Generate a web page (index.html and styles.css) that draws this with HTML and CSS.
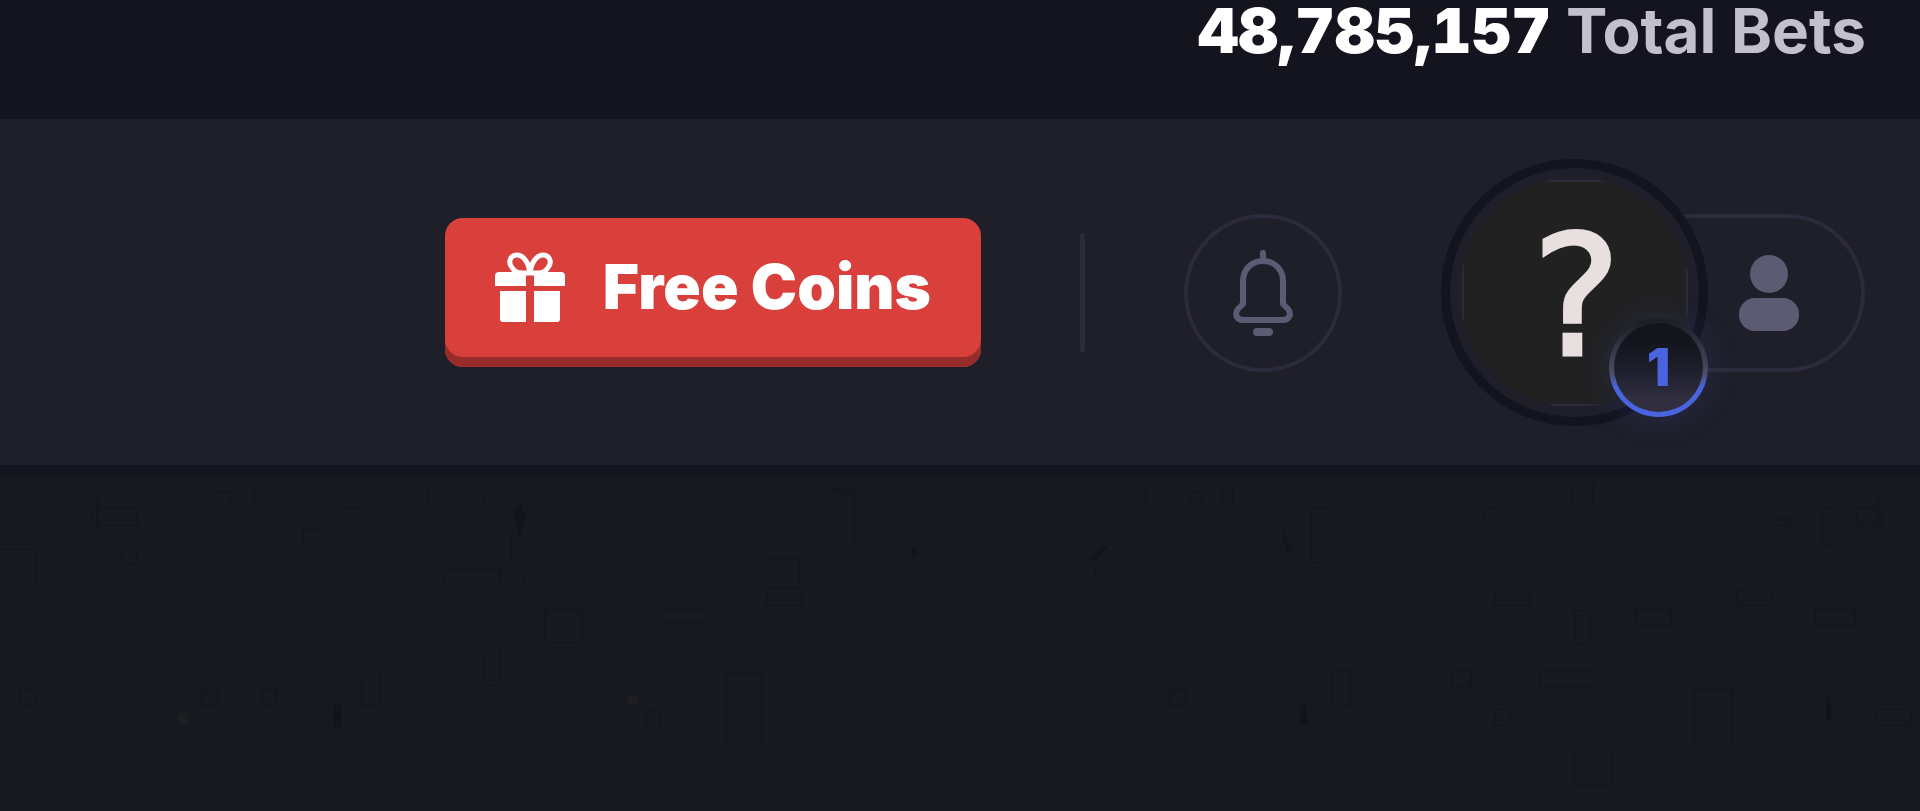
FILE: index.html
```html
<!DOCTYPE html>
<html lang="en">
<head>
  <meta charset="UTF-8">
  <meta name="viewport" content="width=device-width, initial-scale=1.0">
  <title>Free Coins</title>
  <link rel="stylesheet" href="styles.css">
</head>
<body>
  <div class="topbar">
    <p class="total-bets"><strong>48,785,157</strong> Total Bets</p>
  </div>

  <header class="header">
    <button type="button" class="btn-coins">
      <svg class="gift-icon" viewBox="0 0 70 70" aria-hidden="true">
        <path d="M4 20H31V34H0V24Q0 20 4 20ZM39 20H66Q70 20 70 24V34H39Z"/>
        <path d="M5 39H31V70H8Q5 70 5 67ZM39 39H65V67Q65 70 62 70H39Z"/>
        <path class="bow" d="M35 22C34 10 28 3 22 3C16 3 13 9 16 14C18 18 22 21 27 21H43C48 21 52 18 54 14C57 9 54 3 48 3C42 3 36 10 35 22Z"/>
      </svg>
      Free Coins
    </button>

    <span class="divider"></span>

    <button type="button" class="btn-bell" aria-label="Notifications">
      <svg class="bell-icon" viewBox="0 0 60 86" aria-hidden="true">
        <path d="M30 3V10"/>
        <path d="M30 11C18 11 10 20 10 31V54L5 59C1 64 4 70 10 70H50C56 70 59 64 55 59L50 54V31C50 20 42 11 30 11Z"/>
        <path class="clapper" d="M24 82H36"/>
      </svg>
    </button>

    <div class="account">
      <div class="avatar">
        <div class="avatar-image">?</div>
        <span class="level">1</span>
      </div>
      <button type="button" class="btn-profile" aria-label="Profile">
        <svg class="user-icon" viewBox="0 0 60 76" aria-hidden="true">
          <circle cx="30" cy="19" r="19"/>
          <rect x="0" y="43" width="60" height="33" rx="16"/>
        </svg>
      </button>
    </div>
  </header>

  <main class="content">
    <svg class="pattern" viewBox="0 0 1920 346" preserveAspectRatio="xMidYMin slice" aria-hidden="true">
      <g class="outline">
        <path d="M97 33V67M92 43H137V60H92ZM254 23H264V39H254ZM428 23H443V39H428ZM485 39V23H520V70M511 70V100M345 43H360V100H345M303 80V64H320V78M445 119V104H501V119M122 84V99H137V84M0 84H35V120M213 27H231V39H213ZM525 106V122"/>
        <path d="M828 23H864V79H854V30ZM769 94H799V120M767 123H802V140H767ZM362 207H380V240H362ZM483 185H500V220H483ZM545 144H582V178H545ZM262 224H277V240H262ZM202 225H218V240H202ZM20 224H35V240H20ZM726 208H762V281H726ZM664 144H704V158H664ZM646 246H660V261H646Z"/>
        <path d="M1130 23H1146V39H1130ZM1190 27H1202V39H1190ZM1222 23H1233V39H1222ZM1311 43H1328V98H1311ZM1572 23V39M1593 16V39M1412 103H1500M1424 104V142M1495 125H1530V140H1495ZM1484 43H1496V60H1484ZM1822 43H1832V80H1822ZM1857 43H1882V61H1857ZM1773 54H1791V60H1773ZM1878 31V70"/>
        <path d="M1737 125H1772V140H1737ZM1815 144H1855V160H1815ZM1635 144H1671V160H1635ZM1575 146H1590V179H1575ZM1331 206H1350V241H1331ZM1452 206H1471V222H1452ZM1540 206H1592V222H1540ZM1694 224H1733V281H1694ZM1877 244H1911V260H1877ZM1616 244H1632V261H1616ZM1495 244H1510V260H1495ZM1170 224H1186V240H1170ZM1574 287H1612V320H1574Z"/>
      </g>
      <g class="smudge">
        <path d="M514 45L522 42L526 54L518 72ZM1108 81L1096 96L1090 94L1103 81ZM1092 97L1101 118L1095 110ZM911 82H917V93H911ZM1300 240H1307V260H1300ZM333 240H341V262H333ZM1826 232H1831V255H1826ZM1282 64L1292 84L1286 86Z"/>
      </g>
      <g class="spark">
        <circle cx="183" cy="253" r="6"/>
        <circle cx="633" cy="235" r="6"/>
      </g>
    </svg>
  </main>
</body>
</html>
```

FILE: styles.css
```css
* {
  box-sizing: border-box;
}
body {
  margin: 0;
  min-height: 100vh;
  display: flex;
  flex-direction: column;
  font-family: Inter, "Open Sans", sans-serif;
  background-color: #181820;
  color: #fff;
}
button {
  padding: 0;
  border: none;
  background: none;
  font-family: inherit;
  color: inherit;
  cursor: pointer;
}

/* Top bar */
.topbar {
  display: flex;
  justify-content: flex-end;
  padding: 0 54px 57px;
  background-color: #14141f;
}
.total-bets {
  margin: 0;
  font-size: 62px;
  line-height: 62px;
  font-weight: 700;
  color: #c1c0cc;
}
.total-bets strong {
  font-weight: 900;
  font-variant-numeric: tabular-nums;
  color: #fff;
}

/* Header */
.header {
  position: relative;
  display: flex;
  justify-content: flex-end;
  align-items: center;
  gap: 99px;
  padding: 40px 55px 39px;
  background-color: #1f1f2a;
  box-shadow: 0 9px 2px #14141f;
}
.btn-coins {
  display: flex;
  align-items: center;
  gap: 38px;
  height: 149px;
  padding: 0 50px 12px;
  border-radius: 18px;
  background-color: #d9403c;
  box-shadow: inset 0 -10px 0 #982c2b;
  font-size: 62px;
  font-weight: 900;
  line-height: 62px;
  white-space: nowrap;
}
.gift-icon {
  width: 70px;
  height: 70px;
  fill: #fff;
}
.gift-icon .bow {
  fill: none;
  stroke: #fff;
  stroke-width: 5;
}
.divider {
  width: 5px;
  height: 119px;
  border-radius: 2px;
  background-color: #2c2b3b;
}
.btn-bell {
  display: flex;
  justify-content: center;
  align-items: center;
  width: 158px;
  height: 158px;
  border: 4px solid #2c2b3b;
  border-radius: 50%;
}
.bell-icon {
  width: 60px;
  height: 86px;
  fill: none;
  stroke: #5c5b73;
  stroke-width: 6;
  stroke-linecap: round;
  stroke-linejoin: round;
}
.bell-icon .clapper {
  stroke-width: 8;
}

/* Account */
.account {
  display: flex;
  align-items: center;
}
.avatar {
  position: relative;
  z-index: 1;
  display: flex;
  justify-content: center;
  align-items: center;
  width: 267px;
  height: 267px;
  border: 9px solid #14141f;
  border-radius: 50%;
  background-color: #1f1f2a;
}
.avatar-image {
  width: 226px;
  height: 226px;
  padding-left: 4px;
  border: 2px solid #2c2b3b;
  background-color: #212121;
  clip-path: circle(115px);
  font-family: "DejaVu Sans", sans-serif;
  font-size: 168px;
  line-height: 230px;
  text-align: center;
  color: #e7e0df;
  -webkit-text-stroke: 3px #e7e0df;
}
.level {
  position: absolute;
  right: -9px;
  bottom: 0;
  width: 99px;
  height: 99px;
  border: 5px solid transparent;
  border-radius: 50%;
  background: linear-gradient(#14141d 20%, #1f1f2e 55%, #302e3f 85%) padding-box,
              linear-gradient(#1f1f2a 5%, #4c4b60 55%, #4a64e0 70%) border-box;
  box-shadow: 0 0 36px rgba(74, 100, 224, 0.16);
  font-size: 52px;
  font-weight: 900;
  line-height: 89px;
  text-align: center;
  color: #4a64e0;
}
.btn-profile {
  display: flex;
  justify-content: flex-end;
  align-items: center;
  width: 250px;
  height: 158px;
  margin-left: -93px;
  padding-right: 62px;
  border: 4px solid #2c2b3b;
  border-radius: 79px;
}
.user-icon {
  width: 60px;
  height: 76px;
  fill: #5c5b73;
}

/* Page background */
.content {
  flex: 1;
  display: flex;
}
.pattern {
  width: 100%;
  height: 346px;
}
.pattern .outline {
  fill: none;
  stroke: #15151e;
  stroke-width: 2;
}
.pattern .smudge {
  fill: #13131d;
}
.pattern .spark {
  fill: #1d1f1f;
}
```
